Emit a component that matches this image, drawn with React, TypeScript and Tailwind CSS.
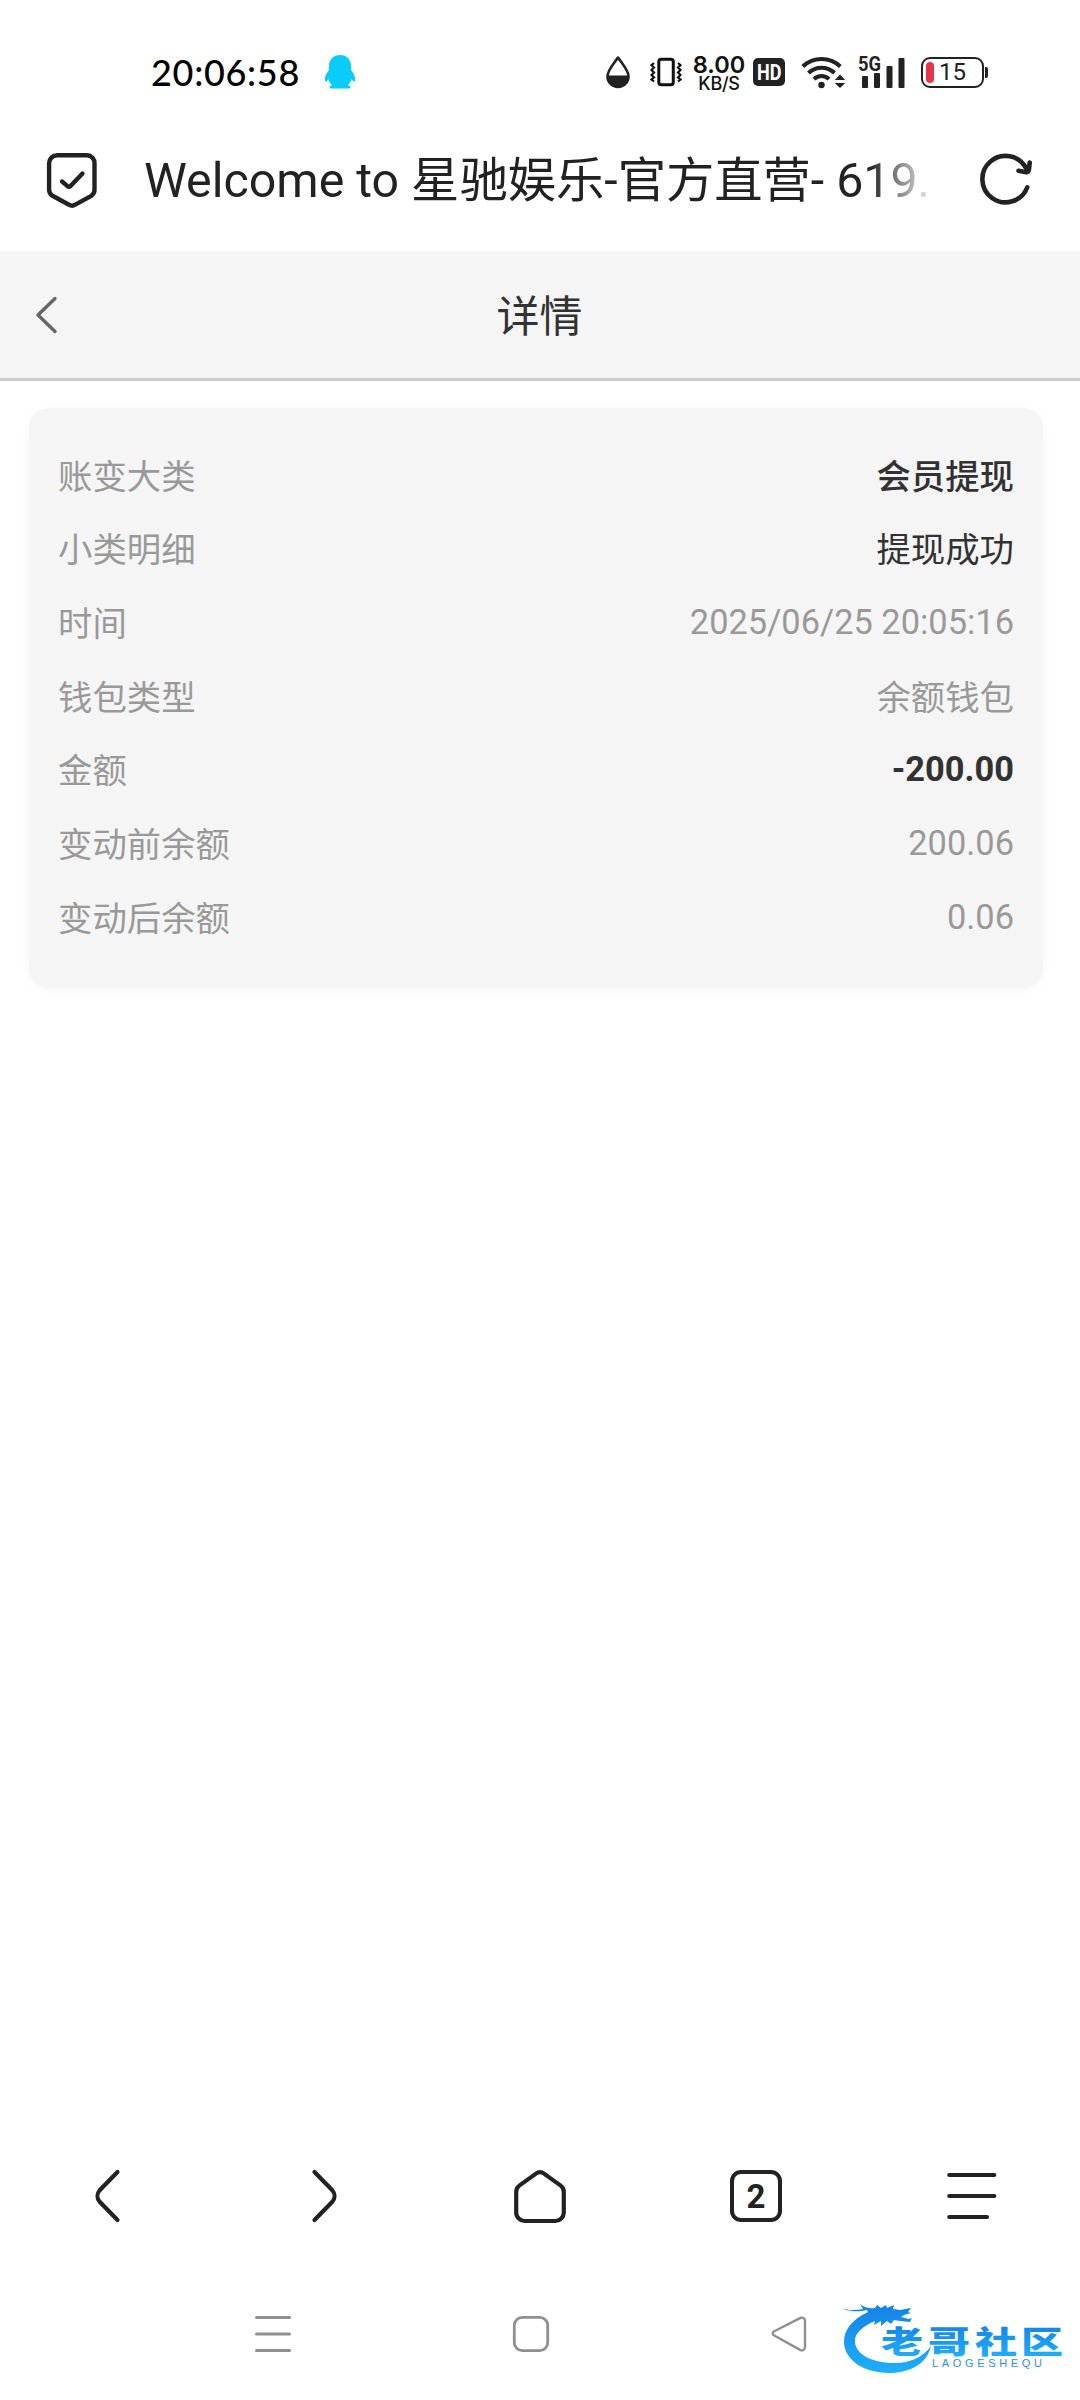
interface DetailRow {
  label: string;
  value: string;
  valueClass: string;
}

const rows: DetailRow[] = [
  { label: '账变大类', value: '会员提现', valueClass: 'pt-[4px] text-[#323233] font-medium' },
  { label: '小类明细', value: '提现成功', valueClass: 'pt-[4px] text-[#323233]' },
  { label: '时间', value: '2025/06/25 20:05:16', valueClass: 'text-[#999999]' },
  { label: '钱包类型', value: '余额钱包', valueClass: 'pt-[4px] text-[#999999]' },
  { label: '金额', value: '-200.00', valueClass: 'text-[#323233] font-bold' },
  { label: '变动前余额', value: '200.06', valueClass: 'text-[#999999]' },
  { label: '变动后余额', value: '0.06', valueClass: 'text-[#999999]' },
];

function StatusBar() {
  return (
    <div className="flex h-[144px] items-center pl-[151px]">
      <span className="w-[150px] whitespace-nowrap font-[Lato,sans-serif] text-[36px] font-medium leading-none tracking-[0.7px] text-black">
        20:06:58
      </span>
      <svg className="ml-[23px]" width="32" height="36" viewBox="0 0 32 36" fill="#0accfb">
        <path d="M16 1C9.500 1 5 5.500 5 12v4C2.800 19 .8 22 .8 25.500c0 1.500.8 2.500 1.500 2 .8-.4 1.500-1.500 2.200-2.500.6 2.500 1.800 4.500 3.500 6-1.500.6-2.500 1.500-2.500 2.500 0 .9 1 1 2 1h17c1 0 2-.1 2-1 0-1-1-1.900-2.500-2.500 1.700-1.500 2.900-3.500 3.500-6 .7 1 1.400 2.100 2.200 2.500.7.500 1.500-.5 1.500-2 0-3.500-2-6.500-4.200-9.500v-4C27 5.500 22.500 1 16 1z" />
      </svg>
      {/* system icons on the right */}
      <svg className="ml-[249px]" width="26" height="34" viewBox="0 0 26 34">
        <path d="M13 2.500C9 8.500 2.500 15 2.500 21.500a10.500 10.500 0 0 0 21 0C23.500 15 17 8.500 13 2.500z" fill="none" stroke="#222" strokeWidth="2.600" strokeLinejoin="round" />
        <path d="M2 20.500h22a11 11 0 0 1-22 0z" fill="#222" />
      </svg>
      <svg className="ml-[19px]" width="32" height="30" viewBox="0 0 32 30" fill="none" stroke="#111">
        <rect x="8.800" y="2.300" width="14.500" height="25.400" rx="2.500" strokeWidth="3" />
        <path d="M4 6 1.500 8.200 4 10.500 1.500 13 4 15.500 1.500 18 4 20.500 1.500 22.500 4 24.500M28 6l2.500 2.200L28 10.500l2.500 2.500-2.500 2.500 2.500 2.500-2.500 2.500 2.500 2-2.500 2" strokeWidth="2.200" />
      </svg>
      <div className="ml-[10px] flex w-[54px] flex-col items-center pt-[3px] font-[Inter,sans-serif] leading-none text-[#111]">
        <span className="text-[23.500px] font-semibold leading-[20px]">8.00</span>
        <span className="text-[18px] font-medium leading-[17px] tracking-[-0.3px]">KB/S</span>
      </div>
      <div className="ml-[7px] flex h-[28px] w-[32px] items-center justify-center rounded-[5px] bg-[#222] text-white">
        <svg width="28" height="28" viewBox="0 0 28 28" fill="currentColor">
          <text x="2" y="21.500" fontFamily="Roboto, sans-serif" fontSize="22" fontWeight="700" textLength="24.500" lengthAdjust="spacingAndGlyphs">HD</text>
        </svg>
      </div>
      <svg className="ml-[16px]" width="45" height="36" viewBox="0 0 45 36" fill="none" stroke="#222" strokeWidth="4">
        <path d="M1.800 12.500a27 27 0 0 1 37.500 0M7.500 19a18.500 18.500 0 0 1 26 0M13 25.200a10.500 10.500 0 0 1 15 0" />
        <circle cx="20.500" cy="31" r="3.200" fill="#222" stroke="none" />
        <path d="m39 20.500 5.200 5.500H33.800zM39 34l5.200-5H33.800z" fill="#222" stroke="none" />
      </svg>
      <svg className="ml-[11px]" width="50" height="36" viewBox="0 0 50 36" fill="#222">
        <rect x="5" y="22" width="6" height="12" rx="1" />
        <rect x="17" y="19" width="6" height="15" rx="1" />
        <rect x="29.500" y="12" width="6" height="22" rx="1" />
        <rect x="41.500" y="4" width="6" height="30" rx="1" />
        <text x="1" y="17" fontFamily="Roboto, sans-serif" fontSize="20" fontWeight="700" textLength="23" lengthAdjust="spacingAndGlyphs">5G</text>
      </svg>
      <div className="ml-[14px] flex h-[31px] w-[63px] items-center rounded-[9px] border-[2.500px] border-[#222] pl-[3px]">
        <div className="h-[21px] w-[8px] rounded-[4px] bg-[#e5364b]" />
        <span className="ml-[5px] font-[Roboto,sans-serif] text-[24px] leading-none text-[#222]">15</span>
      </div>
      <div className="ml-px h-[11px] w-[3px] rounded-r-[2px] bg-[#222]" />
    </div>
  );
}

function AddressBar() {
  return (
    <div className="flex h-[107px] items-start pt-[6px]">
      <svg className="ml-[45px] mt-px" width="54" height="60" viewBox="0 0 54 60" fill="none" stroke="#222" strokeWidth="4.400" strokeLinecap="round" strokeLinejoin="round">
        <path d="M12 4.300h30a7.500 7.500 0 0 1 7.500 8v26.500a7 7 0 0 1-3.200 6L30.300 53.700a6 6 0 0 1-6.300 0L7.500 44.800a7 7 0 0 1-3.400-6V12.300a8 8 0 0 1 8-8z" />
        <path d="m17 30.500 5.500 4.600a2.200 2.200 0 0 0 3 0L37.500 22.500" />
      </svg>
      <div className="ml-[45px] h-[64px] w-[792px] overflow-hidden whitespace-nowrap font-[Roboto,'Noto_Sans_CJK_SC',sans-serif] text-[48.300px] leading-[62px] text-[#222] mask-[linear-gradient(to_right,#000_725px,transparent_792px)]">
        Welcome to 星驰娱乐-官方直营- 619.
      </div>
      <svg className="ml-[43px]" width="56" height="56" viewBox="0 0 56 56" fill="none" stroke="#222" strokeWidth="4.600" strokeLinecap="round" strokeLinejoin="round">
        <path d="M48.200 37.500A23.200 23.200 0 1 1 47.200 18.500" />
        <path d="M50.700 12.500l-.8 7.500a2.500 2.500 0 0 1-2.800 2.200L39.500 20.800" />
      </svg>
    </div>
  );
}

function PageHeader() {
  return (
    <div className="flex h-[130px] items-center border-b-[3px] border-[#cccccc] bg-[#f5f5f5] px-[34px]">
      <svg width="26" height="40" viewBox="0 0 26 40" fill="none" stroke="#666" strokeWidth="3.400" strokeLinecap="round" strokeLinejoin="round">
        <path d="M21 3.500 4 20l17 16.500" />
      </svg>
      <h1 className="mr-[27px] flex-1 pt-[5px] text-center text-[43px] leading-none text-[#323233]">详情</h1>
    </div>
  );
}

function DetailCard() {
  return (
    <div className="ml-[29px] mr-[37px] mt-[27px] rounded-[20px] bg-[#f5f5f5] px-[29px] pb-[34px] pt-[30px] shadow-[0_2px_12px_rgba(0,0,0,0.04)]">
      {rows.map((row) => (
        <div key={row.label} className="flex h-[73.700px] items-center justify-between text-[34.400px] leading-none">
          <span className="pt-[4px] text-[#999999]">{row.label}</span>
          <span className={row.valueClass}>{row.value}</span>
        </div>
      ))}
    </div>
  );
}

function Toolbar() {
  return (
    <div className="grid h-[112px] grid-cols-5 place-items-center text-[#222]">
      <svg width="28" height="56" viewBox="0 0 28 56" fill="none" stroke="currentColor" strokeWidth="4.200" strokeLinecap="round">
        <path d="M23.500 4 5.500 22.500a8.500 8.500 0 0 0 0 11L23.500 52" />
      </svg>
      <svg width="28" height="56" viewBox="0 0 28 56" fill="none" stroke="currentColor" strokeWidth="4.200" strokeLinecap="round">
        <path d="M4.500 4l18 18.500a8.500 8.500 0 0 1 0 11L4.500 52" />
      </svg>
      <svg width="56" height="56" viewBox="0 0 56 56" fill="none" stroke="currentColor" strokeWidth="4.200" strokeLinejoin="round">
        <path d="M24 5.600 7.600 17.400A8 8 0 0 0 4.200 24v20.500a8.500 8.500 0 0 0 8.500 8.500h30.600a8.500 8.500 0 0 0 8.500-8.500V24a8 8 0 0 0-3.400-6.600L32 5.600a7 7 0 0 0-8 0z" />
      </svg>
      <div className="flex size-[52px] items-center justify-center rounded-[11px] border-4 border-[#222] font-[Roboto,sans-serif] text-[33px] font-bold leading-none">
        2
      </div>
      <svg width="50" height="48" viewBox="0 0 50 48" stroke="currentColor" strokeWidth="4.200" strokeLinecap="round">
        <path d="M2.300 3h45M2.300 24h45M2.300 45H40" />
      </svg>
    </div>
  );
}

function SystemNav() {
  return (
    <div className="grid h-[148px] grid-cols-3 items-start justify-items-center pl-[144px] pr-[162px] pt-[63px] text-[#8f8f8f]">
      <svg width="38" height="38" viewBox="0 0 38 38" stroke="currentColor" strokeWidth="3" strokeLinecap="round">
        <path d="M2.500 2.500h33M2.500 19h33M2.500 35.500h33" />
      </svg>
      <svg width="38" height="38" viewBox="0 0 38 38" fill="none" stroke="currentColor" strokeWidth="2.800">
        <rect x="2.300" y="2.300" width="33.400" height="33.400" rx="8" />
      </svg>
      <svg width="38" height="38" viewBox="0 0 38 38" fill="none" stroke="currentColor" strokeWidth="2.400" strokeLinejoin="round">
        <path d="M3.800 16.500 30.500 2.900a3.200 3.200 0 0 1 4.500 2.800v26.600a3.200 3.200 0 0 1-4.500 2.800L3.800 20.300a2.200 2.200 0 0 1 0-3.800z" />
      </svg>
    </div>
  );
}

function CommunityLogo() {
  return (
    <svg className="absolute bottom-[19px] right-[10px]" width="230" height="82" viewBox="0 0 230 82">
      <defs>
        <linearGradient id="logoBlue" x1="0" y1="0" x2="0" y2="1">
          <stop offset="0.100" stopColor="#1280e8" />
          <stop offset="1" stopColor="#22b4fb" />
        </linearGradient>
        <linearGradient id="ringBlue" gradientUnits="userSpaceOnUse" x1="0" y1="5" x2="0" y2="75">
          <stop offset="0" stopColor="#1482e6" />
          <stop offset="1" stopColor="#1fb0fb" />
        </linearGradient>
      </defs>
      {/* dragon body */}
      <path d="M28 13C13 20 4 30 4 43c0 17 19 31 45 31 21 0 38-9 42-27-8 11-21 17-36 17-22 0-39-8-40-21-1-9 8-16 22-22z" fill="url(#ringBlue)" />
      {/* whiskers, mane and head */}
      <path d="M2 9c6 3 14 2 21 1l-3-5c5 4 10 5 15 4l2-3 4 3 5-3 1 3 7-3-1 4 7 1 11-2-3 4 3 1-7 2-3 2 8 2 3-1-2 4-10-1-6-1-3 4-4-3-6 5v-5l-7 4 1-4-7 2 3-5c-2-3-3-5-4-8-8 2-20 2-25-2z" fill="url(#ringBlue)" />
      <g fill="url(#logoBlue)" fontFamily="'Noto Sans CJK SC', sans-serif" fontWeight="900">
        <text transform="translate(41 53.500) scale(1.380 1)" fontSize="30.500">老</text>
        <text transform="translate(88 53.500) scale(1.380 1)" fontSize="30.500">哥</text>
        <text transform="translate(135 53.500) scale(1.380 1)" fontSize="30.500">社</text>
        <text transform="translate(181 53.500) scale(1.380 1)" fontSize="30.500">区</text>
      </g>
      <text x="92" y="67.500" fontFamily="'Liberation Sans', sans-serif" fontSize="11" fill="#2f8fe0" textLength="110">LAOGESHEQU</text>
    </svg>
  );
}

export default function App() {
  return (
    <div className="relative flex h-[2400px] w-[1080px] flex-col overflow-hidden bg-white font-[Roboto,'Noto_Sans_CJK_SC',sans-serif]">
      <StatusBar />
      <AddressBar />
      <PageHeader />
      <main className="flex-1">
        <DetailCard />
      </main>
      <Toolbar />
      <SystemNav />
      <CommunityLogo />
    </div>
  );
}
